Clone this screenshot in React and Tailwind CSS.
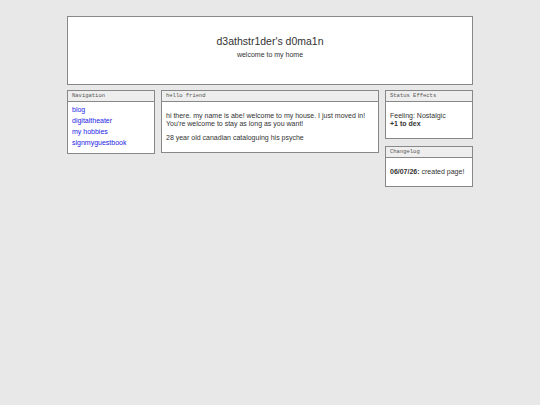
export default function App() {
  const sans = { fontFamily: '"Liberation Sans", Arial, sans-serif' };
  const Box = ({ title, children, bodyClass }) => (
    <div className="bg-white border border-[#888]">
      <div className="h-[11px] border-b border-[#888] bg-[#eeeeee] px-[4px] text-[5.5px] leading-[10px] text-[#555]" style={{ fontFamily: '"Liberation Mono", "DejaVu Sans Mono", monospace' }}>
        {title}
      </div>
      <div className={bodyClass}>{children}</div>
    </div>
  );
  return (
    <div className="min-h-[405px] w-full bg-[#e8e8e8] text-[#333]" style={sans}>
      <div className="w-[406px] ml-[67px] pt-[16px]">
        <div className="bg-white border border-[#888] flex flex-col items-center pt-[18px] pb-[25px]">
          <div className="text-[10.5px] leading-[12px] text-[#333]">d3athstr1der's d0ma1n</div>
          <div className="text-[7px] leading-[8px] mt-[4px] text-[#333]">welcome to my home</div>
        </div>
        <div className="mt-[5px] grid grid-cols-[88px_218px_88px] gap-[6px] items-start">
          <Box title="Navigation" bodyClass="px-[4px] pt-[2px] pb-[5px] text-[7px] leading-[11px]">
            <a className="block text-[#2222e6]" href="#">blog</a>
            <a className="block text-[#2222e6]" href="#">digitaltheater</a>
            <a className="block text-[#2222e6]" href="#">my hobbies</a>
            <a className="block text-[#2222e6]" href="#">signmyguestbook</a>
          </Box>
          <Box title="hello friend" bodyClass="px-[4px] pt-[10px] pb-[10px] text-[7px] leading-[8px] text-[#333]">
            <p>hi there. my name is abe! welcome to my house. I just moved in! You're welcome to stay as long as you want!</p>
            <p className="mt-[6px]">28 year old canadian cataloguing his psyche</p>
          </Box>
          <div className="flex flex-col gap-[7px]">
            <Box title="Status Effects" bodyClass="px-[4px] pt-[10px] pb-[10px] text-[7px] leading-[8px] text-[#333]">
              <div>Feeling: Nostalgic</div>
              <div className="font-bold">+1 to dex</div>
            </Box>
            <Box title="Changelog" bodyClass="px-[4px] pt-[10px] pb-[10px] text-[7px] leading-[8px] text-[#333]">
              <div><span className="font-bold">06/07/26:</span> created page!</div>
            </Box>
          </div>
        </div>
      </div>
    </div>
  );
}
